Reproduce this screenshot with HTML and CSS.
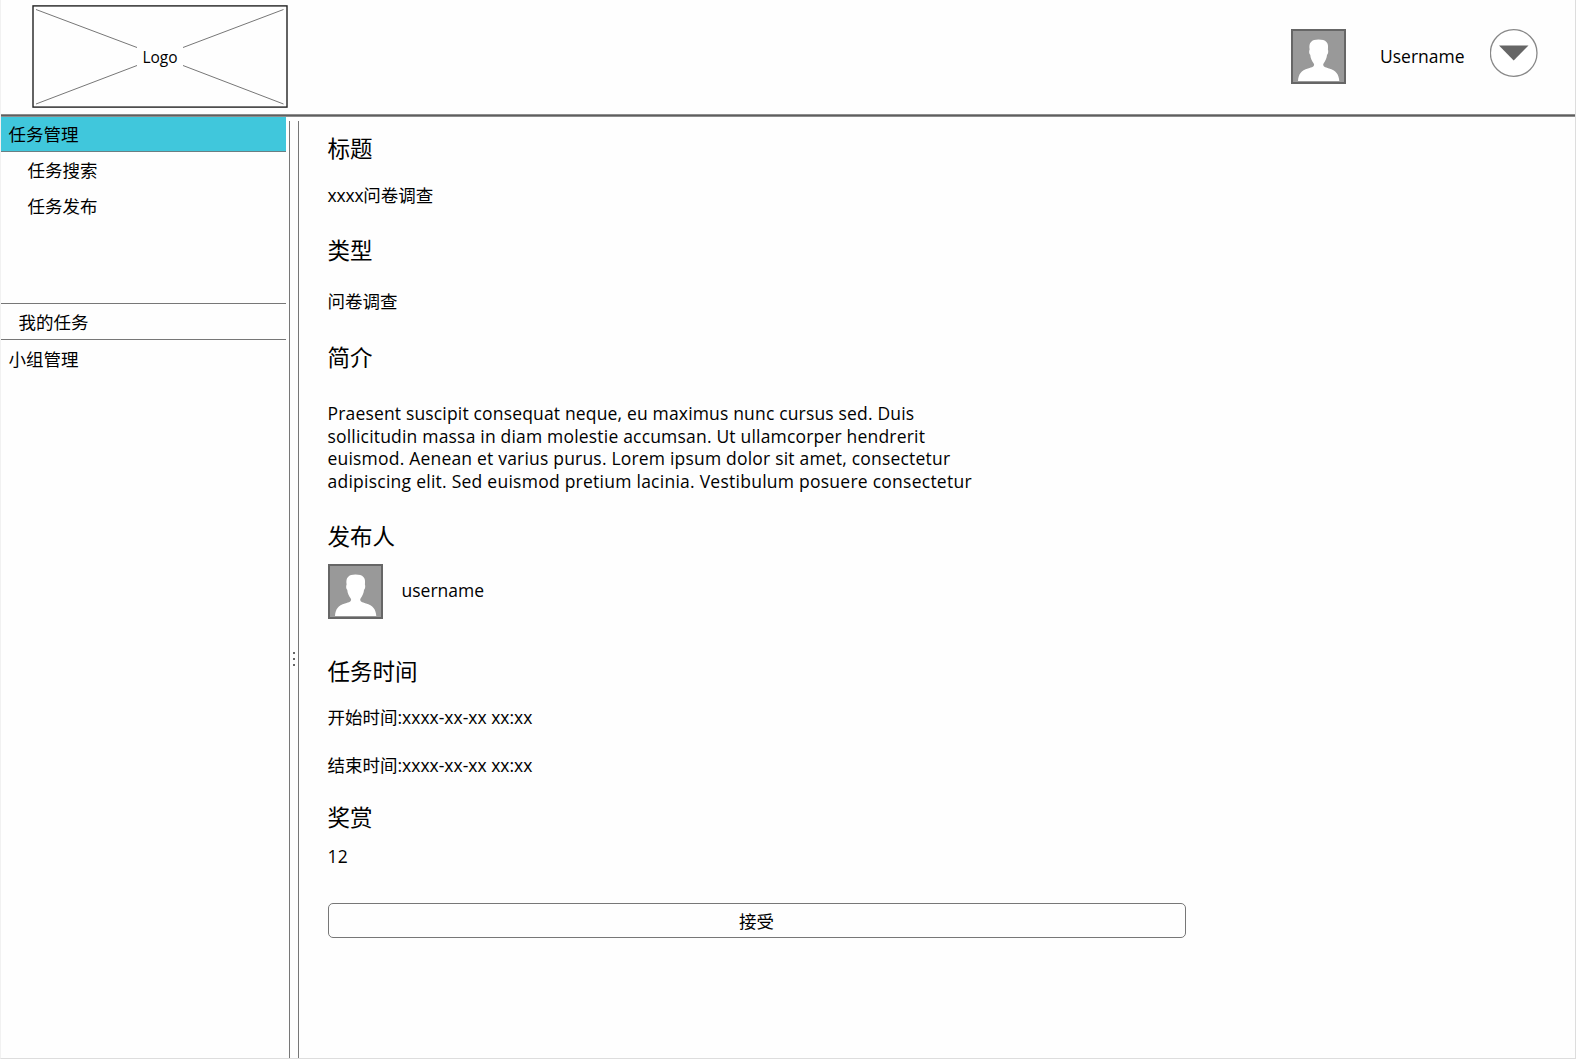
FILE: index.html
```html
<!DOCTYPE html>
<html lang="zh-CN">
<head>
<meta charset="utf-8">
<title>任务详情</title>
<link rel="stylesheet" href="styles.css">
</head>
<body>
<svg class="defs" width="0" height="0">
  <symbol id="avatar" viewBox="0 0 55 55">
    <rect x="1" y="1" width="53" height="53" fill="#999" stroke="#666" stroke-width="2"/>
    <path fill="#fff" d="M7 52 C7.500 45 10 41.500 17 39.500 C21.500 38.200 23.500 37.500 23 35 C20.500 31.500 19.500 29 19.300 26 C17.800 25 18 21.500 18.600 20.500 C17.500 13.500 20.500 10.500 27.500 10.500 C35 10.500 38 13.500 36.900 20.500 C37.500 21.500 37.400 25 36 26 C35.700 29 34.700 31.500 32.300 35 C31.800 37.500 34 38.200 38 39.500 C45 41.500 47.800 45 48.300 52 Z"/>
  </symbol>
</svg>
<div class="page">
  <header class="header">
    <div class="logo">
      <svg width="256" height="103" viewBox="0 0 256 103">
        <rect x="1" y=".9" width="254" height="101.200" fill="none" stroke="#222" stroke-width="1.400"/>
        <path d="M4 4.500 105 42.500M251.500 4.500 151 42.500M4 99 105 60.500M251.500 99 151 60.500" fill="none" stroke="#777" stroke-width="1"/>
      </svg>
      <span class="logo-text">Logo</span>
    </div>
    <div class="account">
      <svg class="avatar"><use href="#avatar"/></svg>
      <span class="account-name">Username</span>
      <svg class="toggle" width="48" height="48" viewBox="0 0 48 48">
        <circle cx="23.700" cy="24" r="23.300" fill="#fff" stroke="#888" stroke-width="1.300"/>
        <path d="M9 16.500h29.500L23.700 31.500z" fill="#666"/>
      </svg>
    </div>
  </header>
  <div class="body">
    <nav class="sidebar">
      <a class="item active">任务管理</a>
      <a class="item sub">任务搜索</a>
      <a class="item sub">任务发布</a>
      <a class="item mine">我的任务</a>
      <a class="item">小组管理</a>
    </nav>
    <div class="splitter"><i></i><i></i><i></i></div>
    <main class="content">
      <h2>标题</h2>
      <p class="title-value"><span class="xs">xxxx</span>问卷调查</p>
      <h2>类型</h2>
      <p class="type-value">问卷调查</p>
      <h2>简介</h2>
      <div class="intro">
        <span class="l1">Praesent suscipit consequat neque, eu maximus nunc cursus sed. Duis</span>
        <span class="l2">sollicitudin massa in diam molestie accumsan. Ut ullamcorper hendrerit</span>
        <span class="l3">euismod. Aenean et varius purus. Lorem ipsum dolor sit amet, consectetur</span>
        <span class="l4">adipiscing elit. Sed euismod pretium lacinia. Vestibulum posuere consectetur</span>
      </div>
      <h2>发布人</h2>
      <div class="publisher">
        <svg class="avatar"><use href="#avatar"/></svg>
        <span>username</span>
      </div>
      <h2>任务时间</h2>
      <p class="start">开始时间<span class="time">:xxxx-xx-xx xx:xx</span></p>
      <p class="end">结束时间<span class="time">:xxxx-xx-xx xx:xx</span></p>
      <h2>奖赏</h2>
      <p class="reward">12</p>
      <button class="accept">接受</button>
    </main>
  </div>
</div>
</body>
</html>
```
FILE: styles.css
```css
* { box-sizing: border-box; }
body {
  margin: 0;
  background: #fff;
  color: #000;
  font: 17.5px/24px "Open Sans", "Noto Sans CJK SC", sans-serif;
}
.defs { display: block; height: 0; }
.page {
  width: 1576px;
  height: 1059px;
  display: flex;
  flex-direction: column;
  border-left: 1px solid #f1f1f1;
  border-right: 1px solid #ddd;
  border-bottom: 1px solid #ddd;
  background: #fefefe;
  overflow: hidden;
}
.header {
  height: 117px;
  flex: none;
  display: flex;
  justify-content: space-between;
  background: linear-gradient(#8c8c8c 1px, #5e5e5e 1px 2px, #8c8c8c 2px) left bottom / 100% 3px no-repeat;
  margin-left: -1px;
}
.logo { display: grid; margin: 5px 0 0 32px; width: 256px; height: 103px; }
.logo > * { grid-area: 1 / 1; }
.logo-text { place-self: center; padding-top: 1px; font-size: 15.5px; }
.account { display: flex; align-items: flex-start; padding: 29px 37px 0 0; }
.avatar { width: 55px; height: 55px; display: block; flex: none; }
.account-name { width: 84px; margin: 15px 26px 0 34px; white-space: nowrap; }
.body { flex: 1; display: flex; min-height: 0; }
.sidebar { width: 285px; display: flex; flex-direction: column; }
.item { height: 36px; flex: none; line-height: 35px; padding-left: 7.5px; }
.item.active { height: 35px; background: #40c7dc; border-bottom: 1px solid #6b7f83; }
.item.sub { padding-left: 26.500px; line-height: 37px; }
.item.mine {
  height: 37px;
  line-height: 37px;
  margin-top: 79px;
  padding-left: 17.5px;
  border-top: 1px solid #777;
  border-bottom: 1px solid #777;
}
.item.mine + .item { line-height: 39px; }
.splitter {
  width: 10px;
  margin: 4px 0 0 3px;
  border-left: 1px solid #777;
  border-right: 1px solid #777;
  display: flex;
  flex-direction: column;
  align-items: center;
  justify-content: center;
  gap: 4px;
  padding-top: 138px;
}
.splitter i { width: 2px; height: 2px; background: #666; }
.content { flex: 1; padding: 16px 0 0 28.5px; }
h2 { margin: 0; font-size: 22.5px; font-weight: 400; line-height: 32px; }
p { margin: 0; }
.title-value { margin: 18px 0 28px; }
.type-value { margin: 22px 0 29px; }
.xs { letter-spacing: -.2px; }
.intro { margin: 28px 0 29px; line-height: 22.5px; }
.intro span { display: block; white-space: nowrap; }
.l1 { letter-spacing: .165px; }
.l2 { letter-spacing: .19px; }
.l3 { letter-spacing: .197px; }
.l4 { letter-spacing: .25px; }
.publisher { display: flex; align-items: center; gap: 19px; margin: 11px 0 37px; }
.publisher span { padding-bottom: 3px; }
.start { margin: 17px 0 24px; }
.end { margin-bottom: 25px; }
.reward { margin: 10px 0 35px; letter-spacing: .3px; }
.accept {
  display: block;
  width: 858px;
  height: 35px;
  padding: 0;
  font: inherit;
  color: inherit;
  background: #fefefe;
  border: 1px solid #777;
  border-radius: 5px;
}
```
